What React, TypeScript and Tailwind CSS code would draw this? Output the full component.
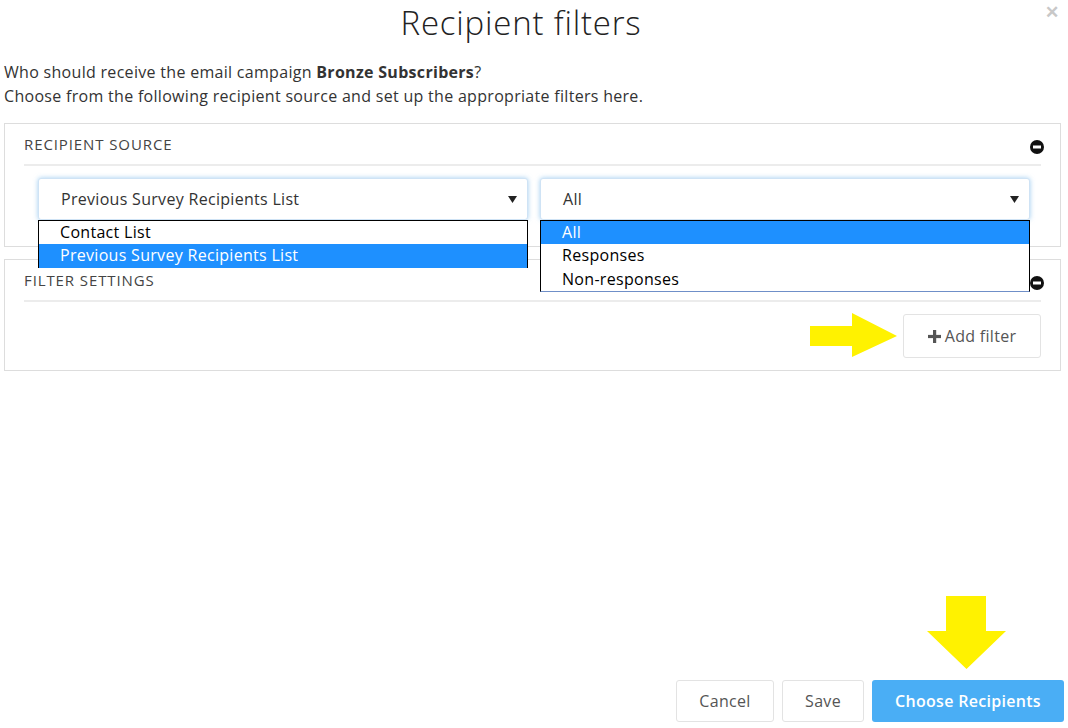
import { useState } from 'react'

const font = { fontFamily: '"Open Sans", Lato, "Liberation Sans", sans-serif' }

function MinusCircle() {
  return (
    <svg width="14" height="14" viewBox="0 0 14 14" className="shrink-0">
      <circle cx="7" cy="7" r="7" fill="#111" />
      <rect x="3" y="5.5" width="8" height="3" fill="#fff" />
    </svg>
  )
}

function Caret() {
  return (
    <svg width="9" height="7" viewBox="0 0 9 7">
      <polygon points="0,0 9,0 4.5,7" fill="#222" />
    </svg>
  )
}

function RightArrow() {
  return (
    <svg width="88" height="45" viewBox="0 0 88 45">
      <polygon points="0,13 42,13 42,0 87,23 42,44 42,33 0,33" fill="#fff200" />
    </svg>
  )
}

function DownArrow() {
  return (
    <svg width="80" height="74" viewBox="0 0 80 74">
      <polygon points="19,0 59,0 59,35 79,35 39.5,73 0,35 19,35" fill="#fff200" />
    </svg>
  )
}

type SelectProps = {
  value: string
  options: string[]
  lastBorder?: boolean
}

function OpenSelect({ value, options, lastBorder }: SelectProps) {
  const [selected] = useState(value)
  return (
    <div className="relative w-[490px]">
      <div className="h-[42px] flex items-center justify-between pl-[22px] pr-[10px] bg-white border border-[#cfe3f5] rounded-[3px] shadow-[0_0_5px_rgba(102,175,233,0.6)] text-[16px] tracking-[0.3px] text-[#333]">
        <span>{selected}</span>
        <Caret />
      </div>
      <ul
        className={`absolute left-0 top-[42px] w-full bg-white border-t border-l border-r border-black z-10 text-[16px] tracking-[0.3px] leading-[23.3px] text-black ${lastBorder ? 'border-b border-b-[#6f8fc8]' : ''}`}
      >
        {options.map(o => (
          <li
            key={o}
            className={`pl-[21px] ${o === selected ? 'bg-[#1e90ff] text-white' : ''}`}
          >
            {o}
          </li>
        ))}
      </ul>
    </div>
  )
}

function Panel({ title, children }: { title: string; children: React.ReactNode }) {
  return (
    <section className="border border-[#dddddd] bg-white">
      <div className="mx-[19px] h-[42px] flex items-center justify-between border-b-2 border-[#ececec] pt-[1px]">
        <h3 className="text-[15px] uppercase tracking-[0.9px] text-[#444] leading-none">{title}</h3>
        <span className="-mr-[3px] mt-[5px]"><MinusCircle /></span>
      </div>
      {children}
    </section>
  )
}

export default function App() {
  return (
    <div style={font} className="relative w-[1068px] h-[728px] bg-white flex flex-col overflow-hidden text-[#333]">
      <button className="absolute right-[9px] top-[3px] text-[17px] font-bold text-[#c8c8c8] leading-none">✕</button>

      <h1 className="h-[45px] text-center text-[33px] font-light tracking-[0.8px] text-[#222] leading-[45px] pr-[26px]">Recipient filters</h1>

      <div className="mt-[15px] px-[4px] text-[16px] tracking-[0.3px] leading-[24px] text-[#333]">
        <p>Who should receive the email campaign <b className="font-bold">Bronze Subscribers</b>?</p>
        <p>Choose from the following recipient source and set up the appropriate filters here.</p>
      </div>

      <div className="mt-[15px] mx-[4px] w-[1057px] flex flex-col gap-[12px]">
        <Panel title="Recipient Source">
          <div className="flex gap-[12px] pl-[33px] pt-[12px] pb-[26px] relative z-10">
            <OpenSelect value="Previous Survey Recipients List" options={['Contact List', 'Previous Survey Recipients List']} />
            <OpenSelect value="All" options={['All', 'Responses', 'Non-responses']} lastBorder />
          </div>
        </Panel>

        <Panel title="Filter Settings">
          <div className="flex justify-end items-center pr-[19px] pt-[12px] pb-[12px]">
            <span className="mr-[5px] -mt-[2px]"><RightArrow /></span>
            <button className="h-[44px] w-[138px] justify-center flex items-center gap-[4px] border border-[#e3e3e3] rounded-[3px] bg-white text-[16px] tracking-[0.3px] text-[#555]">
              <svg width="13" height="13" viewBox="0 0 13 13">
                <rect x="5" y="0" width="3.2" height="13" fill="#555" />
                <rect x="0" y="4.9" width="13" height="3.2" fill="#555" />
              </svg>
              Add filter
            </button>
          </div>
        </Panel>
      </div>

      <div className="mt-auto flex flex-col items-end pr-[4px] pb-[6px]">
        <span className="mr-[57px] mb-[10px]"><DownArrow /></span>
        <div className="flex gap-[8px] text-[16px] tracking-[0.3px]">
          <button className="h-[42px] w-[98px] border border-[#e3e3e3] rounded-[3px] bg-white text-[#555]">Cancel</button>
          <button className="h-[42px] w-[82px] border border-[#e3e3e3] rounded-[3px] bg-white text-[#555]">Save</button>
          <button className="h-[42px] w-[192px] rounded-[3px] bg-[#4aaef5] font-semibold text-white">Choose Recipients</button>
        </div>
      </div>
    </div>
  )
}
